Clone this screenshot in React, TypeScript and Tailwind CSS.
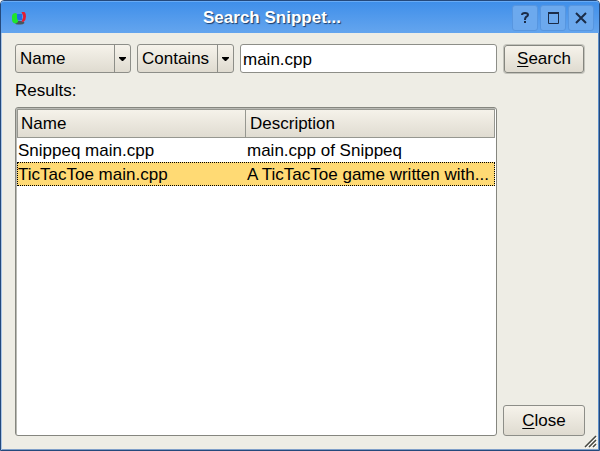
import { useState } from "react";
import type { ReactNode } from "react";

const face = "bg-linear-to-b from-[#f6f3eb] to-[#dfdbd0]";

function TitleButton({ label, children }: { label: string; children: ReactNode }) {
  return (
    <button
      type="button"
      aria-label={label}
      className="flex h-[26px] w-[26px] items-center justify-center rounded-[3px] border border-[#5796e0] bg-[#6ca9ee]"
    >
      <svg width="14" height="14" viewBox="0 0 14 14" fill="none" stroke="#1b2c48" aria-hidden="true">
        {children}
      </svg>
    </button>
  );
}

function Combo({ label, options, width }: { label: string; options: string[]; width: string }) {
  return (
    <div className={`relative h-[29px] shrink-0 ${width}`}>
      <select
        aria-label={label}
        className={`h-full w-full appearance-none rounded-[3px] border border-[#8d8e88] pr-5 pl-1 text-[17px] leading-5 text-black ${face}`}
      >
        {options.map((option) => (
          <option key={option}>{option}</option>
        ))}
      </select>
      <span className="pointer-events-none absolute inset-y-px right-px flex w-4 items-center justify-center border-l border-[#8d8e88]">
        <svg width="7" height="4" viewBox="0 0 7 4" aria-hidden="true">
          <path d="M0 0h7v1L4 4H3L0 1z" fill="#000" />
        </svg>
      </span>
    </div>
  );
}

function PushButton({ first, rest, isDefault }: { first: string; rest: string; isDefault?: boolean }) {
  return (
    <button
      type="button"
      className={`w-full rounded-[3px] border text-[17px] leading-5 text-black ${face} ${
        isDefault
          ? "h-7 border-[#85867f] shadow-[0_0_0_1px_#c3c3bb]"
          : "h-[31px] border-[#8d8e88]"
      }`}
    >
      <span className="underline decoration-1 underline-offset-2">{first}</span>
      {rest}
    </button>
  );
}

const snippets = [
  { name: "Snippeq main.cpp", description: "main.cpp of Snippeq" },
  { name: "TicTacToe main.cpp", description: "A TicTacToe game written with..." },
];

export default function App() {
  const [query, setQuery] = useState("main.cpp");
  const [selected, setSelected] = useState(1);

  return (
    <div className="bg-white font-['Liberation_Sans',Arial,sans-serif] text-[17px] leading-6 text-black">
      <div className="relative flex min-h-screen flex-col rounded-t-[4px] border border-[#24497c] bg-[#eeede5] shadow-[inset_1px_0_0_#a9c6e8,inset_-1px_0_0_#5d8fc9,inset_0_-1px_0_#7f9fc8]">
        <header className="flex h-8 items-center rounded-t-[3px] border-t border-[#68abf6] bg-linear-to-b from-[#3f8fea] to-[#64a5ee] pr-[5px] pl-[9px]">
          <svg width="18" height="16" viewBox="0 0 18 16" aria-hidden="true">
            <path d="M5 11.5q4-1.500 9 0.500l0.500 1q-1.500 1.500-4 1.500H8q-2.500 0-3-1.500z" fill="#47575d" />
            <rect x="7" y="4" width="5" height="6" fill="#1c6fe6" />
            <path d="M2 6q0.500-3 3.500-3 1.500 0 1.500 1.500v3.500q0 1 1 2v2l-2 1.500q-4 0-4-4z" fill="#1fe52c" />
            <path d="M11.500 2h3q1.500 1 1.500 4.500 0 3.500-2.500 5.500l-2-0.500 1-2.500q1-1.500 0.500-3.500z" fill="#e21d34" />
          </svg>
          <h1 className="flex-1 pl-1 text-center text-[17px] font-bold text-white [text-shadow:1px_1px_1px_#1d3c68]">
            Search Snippet...
          </h1>
          <div className="flex gap-[2px]">
            <TitleButton label="Help">
              <path d="M4 4q0-2 3-2t3 2q0 1-2 2-1 1-1 3M6 11h2" strokeWidth="2" />
            </TitleButton>
            <TitleButton label="Maximize">
              <path d="M2.5 1.500h10v11h-10z" strokeWidth="1" />
              <path d="M2 2h11" strokeWidth="2" />
            </TitleButton>
            <TitleButton label="Close window">
              <path d="M2 2l10 10M12 2L2 12" strokeWidth="2" />
            </TitleButton>
          </div>
        </header>

        <main className="flex flex-1 gap-[6px] pt-[11px] pr-[14px] pb-[14px] pl-[14px]">
          <div className="flex min-w-0 flex-1 flex-col">
            <div className="flex gap-[6px]">
              <Combo label="Search field" options={["Name", "Description"]} width="w-[116px]" />
              <Combo label="Condition" options={["Contains", "Equals"]} width="w-[97px]" />
              <input
                type="text"
                aria-label="Search text"
                value={query}
                onChange={(event) => setQuery(event.target.value)}
                className="h-[29px] min-w-0 flex-1 rounded-[3px] border border-[#8d8e88] bg-white px-[2px] pt-[2px] text-[17px] leading-5"
              />
            </div>
            <h2 id="results" className="pt-[6px] pb-1">
              Results:
            </h2>
            <div className="flex-1 rounded-[3px] border border-[#85867f] bg-white pt-px pr-px pl-px shadow-[inset_1px_1px_0_#b9bab4]">
              <table aria-labelledby="results" className="w-full table-fixed border-separate border-spacing-0 text-left">
                <thead>
                  <tr className={`h-[29px] ${face}`}>
                    <th scope="col" className="w-[229px] border border-[#969790] px-[3px] py-0 font-normal">
                      Name
                    </th>
                    <th scope="col" className="border border-l-0 border-[#969790] px-1 py-0 font-normal">
                      Description
                    </th>
                  </tr>
                </thead>
                <tbody>
                  {snippets.map((snippet, index) => (
                    <tr
                      key={snippet.name}
                      aria-selected={index === selected}
                      onClick={() => setSelected(index)}
                      className={
                        index === selected
                          ? "h-6 bg-[#ffda74] outline-1 -outline-offset-1 outline-black outline-dotted"
                          : "h-6"
                      }
                    >
                      <td className="truncate px-px pt-[2px] pb-0 leading-[22px]">{snippet.name}</td>
                      <td className="truncate px-px pt-[2px] pb-0 leading-[22px]">{snippet.description}</td>
                    </tr>
                  ))}
                </tbody>
              </table>
            </div>
          </div>
          <div className="flex w-[82px] shrink-0 flex-col justify-between">
            <div className="p-px">
              <PushButton first="S" rest="earch" isDefault />
            </div>
            <PushButton first="C" rest="lose" />
          </div>
        </main>

        <svg className="absolute right-[2px] bottom-[2px]" width="13" height="13" viewBox="0 0 13 13" aria-hidden="true">
          <path d="M1 12L12 1M5 12l7-7M9 12l3-3" stroke="#fff" strokeWidth="1" transform="translate(1 1)" />
          <path d="M1 12L12 1M5 12l7-7M9 12l3-3" stroke="#45463f" strokeWidth="1.500" />
        </svg>
      </div>
    </div>
  );
}
